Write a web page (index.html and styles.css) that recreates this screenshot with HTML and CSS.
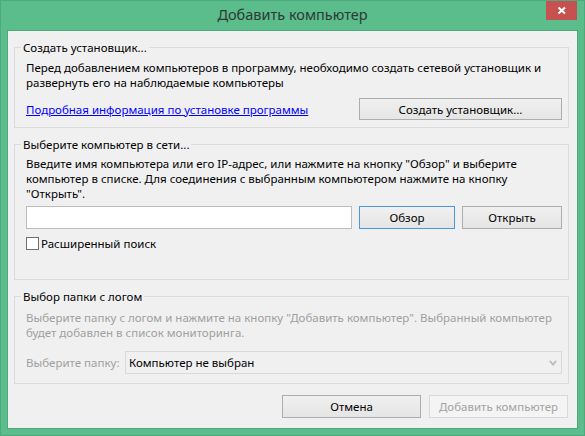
FILE: index.html
```html
<!DOCTYPE html>
<html lang="ru">
<head>
<meta charset="utf-8">
<title>Добавить компьютер</title>
<link rel="stylesheet" href="styles.css">
</head>
<body>
<div class="window">
  <div class="titlebar">
    <span class="title-spacer"></span>
    <div class="title">Добавить компьютер</div>
    <div class="close" aria-label="Закрыть">
      <svg width="31" height="19" viewBox="0 0 31 19"><path d="M12.5 6.5 L19 12.5 M19 6.5 L12.5 12.5" stroke="#fff" stroke-width="2" fill="none"/></svg>
    </div>
  </div>
  <div class="panel">
    <fieldset class="group group-installer">
      <legend>Создать установщик...</legend>
      <div class="group-body">
        <p class="desc">Перед добавлением компьютеров в программу, необходимо создать сетевой установщик и<br>развернуть его на наблюдаемые компьютеры</p>
        <div class="link-row">
          <a class="link" href="#">Подробная информация по установке программы</a>
          <button class="btn btn-installer" type="button">Создать установщик...</button>
        </div>
      </div>
    </fieldset>

    <fieldset class="group group-network">
      <legend>Выберите компьютер в сети...</legend>
      <div class="group-body">
        <p class="desc">Введите имя компьютера или его IP-адрес, или нажмите на кнопку "Обзор" и выберите<br>компьютер в списке. Для соединения с выбранным компьютером нажмите на кнопку<br>"Открыть".</p>
        <div class="input-row">
          <input class="text-input" type="text">
          <button class="btn btn-default" type="button">Обзор</button>
          <button class="btn" type="button">Открыть</button>
        </div>
        <label class="check"><span class="check-box"></span><span class="check-label">Расширенный поиск</span></label>
      </div>
    </fieldset>

    <fieldset class="group group-log">
      <legend>Выбор папки с логом</legend>
      <div class="group-body">
        <p class="desc muted">Выберите папку с логом и нажмите на кнопку "Добавить компьютер". Выбранный компьютер<br>будет добавлен в список мониторинга.</p>
        <div class="folder-row">
          <span class="muted folder-label">Выберите папку:</span>
          <div class="combo">
            <span class="combo-value">Компьютер не выбран</span>
            <svg class="combo-arrow" width="8" height="6" viewBox="0 0 8 6"><path d="M0.8 0.8 L4 4.6 L7.2 0.8" stroke="#bdbdbd" stroke-width="1.8" fill="none"/></svg>
          </div>
        </div>
      </div>
    </fieldset>

    <div class="actions">
      <button class="btn btn-action" type="button">Отмена</button>
      <button class="btn btn-action" type="button" disabled>Добавить компьютер</button>
    </div>
  </div>
</div>
</body>
</html>
```
FILE: styles.css
```css
* { box-sizing: border-box; }

html, body {
  margin: 0;
  padding: 0;
}

body {
  width: 585px;
  height: 436px;
  overflow: hidden;
  font-family: "Noto Sans", "Open Sans", sans-serif;
  font-size: 11.5px;
  color: #000;
  background: #5bbc8c;
}

.window {
  width: 585px;
  height: 436px;
  border: 1px solid #4ea97d;
  background: #5bbc8c;
  display: flex;
  flex-direction: column;
}

.titlebar {
  height: 30px;
  display: grid;
  grid-template-columns: 1fr auto 1fr;
  padding: 0 7px;
}

.title {
  padding-top: 3px;
  font-size: 14.5px;
  line-height: 20px;
  color: #2e3a33;
  white-space: nowrap;
}

.close {
  justify-self: end;
  width: 31px;
  height: 19px;
  background: #c75050;
  display: flex;
}

.panel {
  margin: 0 7px;
  height: 397px;
  background: #f0f0f0;
  box-shadow: 0 0 0 1px #4fa87c;
  padding: 9px 8px 0 6px;
  display: flex;
  flex-direction: column;
}

.group {
  margin: 0;
  padding: 0;
  min-width: 0;
  border: 1px solid #dcdcdc;
}

.group legend {
  margin-left: 6px;
  padding: 0 2px;
  line-height: 15px;
  white-space: nowrap;
}

.group + .group {
  margin-top: 9px;
}

.group-body {
  padding: 5px 6px 7px 11px;
}

.desc {
  margin: 0;
  line-height: 15px;
  white-space: nowrap;
}

.muted {
  color: #a0a0a0;
}

.link-row {
  margin-top: 8px;
  display: flex;
  justify-content: space-between;
  align-items: center;
}

.link {
  color: #0000ff;
  text-decoration: underline;
}

.btn {
  font-family: inherit;
  font-size: 11.5px;
  color: #000;
  height: 23px;
  padding: 0;
  border: 1px solid #adadad;
  border-radius: 0;
  background: linear-gradient(#f0f0f0, #e5e5e5);
  white-space: nowrap;
}

.btn-installer {
  width: 203px;
  height: 22px;
}

.btn-default {
  border-color: #4a98e4;
}

.btn:disabled {
  color: #a3a3a3;
  border-color: #d9d9d9;
  background: #f4f4f4;
}

.group-network .group-body {
  padding: 4px 6px 29px 11px;
}

.input-row {
  margin-top: 5px;
  display: grid;
  grid-template-columns: 1fr 96px 100px;
  gap: 7px;
}

.text-input {
  height: 23px;
  margin: 0;
  border: 1px solid #bcbcbc;
  background: #fff;
  font-family: inherit;
  font-size: 11.5px;
  padding: 0 3px;
  outline: none;
}

.check {
  margin-top: 8px;
  display: flex;
  align-items: center;
  height: 13px;
  line-height: 13px;
}

.check-box {
  width: 13px;
  height: 13px;
  border: 1px solid #707070;
  background: #fff;
  flex: none;
}

.check-label {
  margin-left: 2px;
  white-space: nowrap;
}

.group-log .group-body {
  padding: 6px 6px 9px 11px;
}

.folder-row {
  margin-top: 11px;
  display: grid;
  grid-template-columns: 99px 1fr;
  align-items: center;
}

.folder-label {
  white-space: nowrap;
}

.combo {
  height: 23px;
  border: 1px solid #d9d9d9;
  display: flex;
  align-items: center;
  justify-content: space-between;
  padding: 0 4px 0 3px;
}

.combo-value {
  white-space: nowrap;
}

.actions {
  margin-top: 11px;
  padding-right: 1px;
  display: flex;
  justify-content: flex-end;
  gap: 8px;
}

.btn-action {
  width: 139px;
}
```
